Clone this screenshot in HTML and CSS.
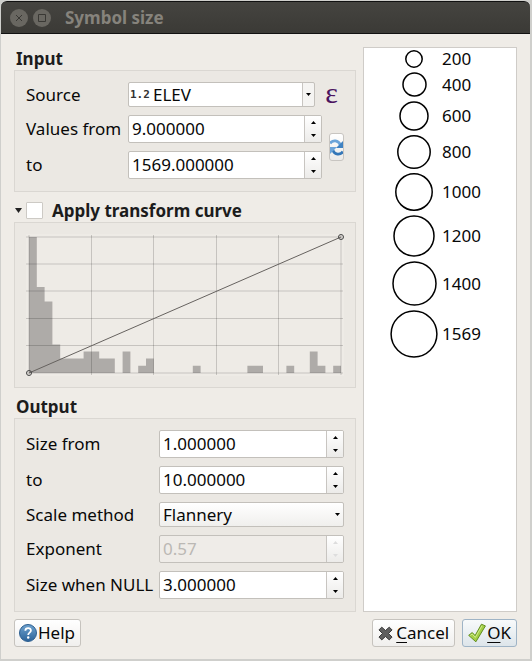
FILE: index.html
```html
<!DOCTYPE html>
<html lang="en">
<head>
<meta charset="utf-8">
<title>Symbol size</title>
<link rel="stylesheet" href="styles.css">
</head>
<body>
<main class="window">
  <header class="titlebar">
    <button class="win-btn" type="button" aria-label="Close">
      <svg viewBox="0 0 18 18"><path d="M6 6l6 6M12 6l-6 6"/></svg>
    </button>
    <button class="win-btn" type="button" aria-label="Maximize">
      <svg viewBox="0 0 18 18"><path d="M5.500 5.500h7v7h-7z"/></svg>
    </button>
    <h1 class="title">Symbol size</h1>
  </header>

  <form class="content">
    <div class="panes">
      <div class="settings">
        <section>
          <h2 class="heading">Input</h2>
          <div class="frame input-grid">
            <label for="source">Source</label>
            <div class="source-row">
              <div class="field-select">
                <span class="type-icon">1.2</span>
                <select id="source" class="select editable"><option>ELEV</option></select>
                <svg class="caret" viewBox="0 0 5 3"><path d="M0 0h5L2.500 3z"/></svg>
              </div>
              <button class="expression" type="button" aria-label="Expression">ε</button>
            </div>

            <label for="from">Values from</label>
            <div class="spin">
              <input id="from" type="text" value="9.000000">
              <div class="steps">
                <button type="button" aria-label="Increase"><svg viewBox="0 0 5 3"><path d="M0 3h5L2.500 0z"/></svg></button>
                <button type="button" aria-label="Decrease"><svg viewBox="0 0 5 3"><path d="M0 0h5L2.500 3z"/></svg></button>
              </div>
            </div>
            <button class="refresh" type="button" aria-label="Refresh">
              <svg viewBox="0 0 14 20">
                <path class="ring-dark" d="M0 5.500C3 1.500 9 2 11 7"/>
                <path class="head-dark" d="M14 3v7.500H6.500z"/>
                <path class="ring-light" d="M14 14.500C11 18.500 5 18 3 13"/>
                <path class="head-light" d="M0 17V9.500h7.500z"/>
              </svg>
            </button>

            <label for="upto">to</label>
            <div class="spin">
              <input id="upto" type="text" value="1569.000000">
              <div class="steps">
                <button type="button" aria-label="Increase"><svg viewBox="0 0 5 3"><path d="M0 3h5L2.500 0z"/></svg></button>
                <button type="button" aria-label="Decrease"><svg viewBox="0 0 5 3"><path d="M0 0h5L2.500 3z"/></svg></button>
              </div>
            </div>
          </div>
        </section>

        <section>
          <h2 class="heading curve-heading">
            <svg class="fold" viewBox="0 0 7 5"><path d="M0 0h7L3.500 5z"/></svg>
            <input id="curve" type="checkbox">
            <label for="curve">Apply transform curve</label>
          </h2>
          <div class="frame chart-frame">
            <svg class="chart" viewBox="0 0 318 142" role="img" aria-label="Histogram with transform curve">
              <rect class="plot" width="318" height="142"/>
              <path class="bars" d="M3 139V3h7.800v50h7.800v14.500h7.800v43h7.800v14h23.400v-7h15.600v7h15.600V139zM96.600 139v-21.500h7.800V139zM112.200 139v-7.200h7.800v-7.200h7.800V139zM166.800 139v-7.200h7.800v7.200zM221.400 139v-7.200h15.600v7.200zM260.400 139v-7.200h7.800v7.200zM283.800 139v-21.500h7.800v14.300h7.800v7.200zM307.200 139v-7.200h7.800v7.200z"/>
              <path class="grid" d="M3 1v140M65.500 1v140M127.500 1v140M190.500 1v140M252.500 1v140M315 1v140M0 3h317M0 30h317M0 57h317M0 84.500h317M0 111.500h317M0 139h317"/>
              <path class="curve" d="M3 139L315 3"/>
              <circle class="knot" cx="3" cy="139" r="2.500"/>
              <circle class="knot" cx="315" cy="3" r="2.500"/>
            </svg>
          </div>
        </section>

        <section>
          <h2 class="heading">Output</h2>
          <div class="frame output-grid">
            <label for="size-from">Size from</label>
            <div class="spin">
              <input id="size-from" type="text" value="1.000000">
              <div class="steps">
                <button type="button" aria-label="Increase"><svg viewBox="0 0 5 3"><path d="M0 3h5L2.500 0z"/></svg></button>
                <button type="button" aria-label="Decrease"><svg viewBox="0 0 5 3"><path d="M0 0h5L2.500 3z"/></svg></button>
              </div>
            </div>
            <label for="size-to">to</label>
            <div class="spin">
              <input id="size-to" type="text" value="10.000000">
              <div class="steps">
                <button type="button" aria-label="Increase"><svg viewBox="0 0 5 3"><path d="M0 3h5L2.500 0z"/></svg></button>
                <button type="button" aria-label="Decrease"><svg viewBox="0 0 5 3"><path d="M0 0h5L2.500 3z"/></svg></button>
              </div>
            </div>
            <label for="method">Scale method</label>
            <div class="field-select">
              <select id="method" class="select"><option>Flannery</option></select>
              <svg class="caret" viewBox="0 0 5 3"><path d="M0 0h5L2.500 3z"/></svg>
            </div>
            <label for="exponent">Exponent</label>
            <div class="spin disabled">
              <input id="exponent" type="text" value="0.57" disabled>
              <div class="steps">
                <button type="button" aria-label="Increase" disabled><svg viewBox="0 0 5 3"><path d="M0 3h5L2.500 0z"/></svg></button>
                <button type="button" aria-label="Decrease" disabled><svg viewBox="0 0 5 3"><path d="M0 0h5L2.500 3z"/></svg></button>
              </div>
            </div>
            <label for="size-null">Size when NULL</label>
            <div class="spin">
              <input id="size-null" type="text" value="3.000000">
              <div class="steps">
                <button type="button" aria-label="Increase"><svg viewBox="0 0 5 3"><path d="M0 3h5L2.500 0z"/></svg></button>
                <button type="button" aria-label="Decrease"><svg viewBox="0 0 5 3"><path d="M0 0h5L2.500 3z"/></svg></button>
              </div>
            </div>
          </div>
        </section>
      </div>

      <ul class="legend">
        <li><svg class="dot" width="18" height="18"><circle cx="9" cy="9" r="8.200"/></svg>200</li>
        <li><svg class="dot" width="25" height="25"><circle cx="12.500" cy="12.500" r="11.500"/></svg>400</li>
        <li><svg class="dot" width="30" height="30"><circle cx="15" cy="15" r="14"/></svg>600</li>
        <li><svg class="dot" width="34" height="34"><circle cx="17" cy="17" r="16.200"/></svg>800</li>
        <li><svg class="dot" width="38" height="38"><circle cx="19" cy="19" r="18.200"/></svg>1000</li>
        <li><svg class="dot" width="42" height="42"><circle cx="21" cy="21" r="20"/></svg>1200</li>
        <li><svg class="dot" width="45" height="45"><circle cx="22.500" cy="22.500" r="21.500"/></svg>1400</li>
        <li><svg class="dot" width="48" height="48"><circle cx="24" cy="24" r="22.900"/></svg>1569</li>
      </ul>
    </div>

    <footer class="actions">
      <button class="btn help" type="button">
        <svg class="help-icon" viewBox="0 0 18 18">
          <defs><linearGradient id="blue" x2="0" y2="1"><stop offset="0" stop-color="#6fa3cf"/><stop offset="1" stop-color="#2a6299"/></linearGradient></defs>
          <circle cx="9" cy="9" r="8.500" fill="url(#blue)" stroke="#2d5f90"/>
          <path d="M6.300 6.700c.2-3.600 5.800-3.400 5.600 0-.1 2-2.700 2-2.700 4.300" fill="none" stroke="#fff" stroke-width="1.800"/>
          <circle cx="9.200" cy="13.500" r="1.200" fill="#fff"/>
        </svg><span>Help</span>
      </button>
      <button class="btn cancel" type="button">
        <svg class="cancel-icon" viewBox="0 0 16 16">
          <path d="M4 1.200l4 3.600 4-3.600 3 3L11.200 8l3.800 3.800-3 3-4-3.600-4 3.600-3-3L4.800 8 1 4.200z" fill="#5f5f5f" stroke="#333" stroke-linejoin="round"/>
        </svg><span><u>C</u>ancel</span>
      </button>
      <button class="btn ok" type="submit">
        <svg class="ok-icon" viewBox="0 0 19 20">
          <path d="M.7 12.500l3.800-3 3 3.200L14.200.7l4.200 1.800L8.300 19.300z" fill="#a3cf45" stroke="#5d8a1c" stroke-linejoin="round"/>
          <path d="M2.400 12.600l2-1.500 3.300 3.600L14.800 2.300" fill="none" stroke="#d3ec92"/>
        </svg><span><u>O</u>K</span>
      </button>
    </footer>
  </form>
</main>
</body>
</html>
```
FILE: styles.css
```css
* { box-sizing: border-box; }

body {
  margin: 0;
  padding: 1px 2px 2px 1px;
  min-height: 100vh;
  display: flex;
  background: #cfcfcc;
  color: #080808;
  font: 17px/20px "Noto Sans", sans-serif;
}

button, input, select { font: inherit; color: inherit; margin: 0; padding: 0; }
svg { display: block; }

.window {
  flex: 1;
  display: flex;
  flex-direction: column;
  background: #efece7;
  border-radius: 6px 6px 0 0;
}

.titlebar {
  height: 33px;
  padding: 0 9px;
  display: flex;
  align-items: center;
  gap: 5px;
  background: linear-gradient(#454440, #3b3a36);
  border: solid #111;
  border-width: 1px 0;
  border-radius: 6px 6px 0 0;
}
.win-btn {
  width: 18px;
  height: 18px;
  border: 0;
  border-radius: 50%;
  background: #696761;
}
.win-btn svg { fill: none; stroke: #393834; stroke-width: 1; }
.title { margin: 0 0 0 9px; font-size: 17px; line-height: 20px; color: #86837c; }

.content { flex: 1; display: flex; flex-direction: column; padding: 13px 13px 12px; }
.panes { flex: 1; display: flex; gap: 7px; }
.settings { flex: 1; display: flex; flex-direction: column; gap: 7px; }

.heading {
  height: 23px;
  margin: 0;
  padding-left: 2px;
  font-size: 17px;
  line-height: 23px;
  color: #1c1c1c;
}
.frame { border: 1px solid #dad7d2; background: #ebe8e3; }
.frame label { white-space: nowrap; align-self: center; }

.input-grid, .output-grid { display: grid; align-items: center; row-gap: 8px; }
.input-grid { grid-template-columns: 95px 1fr 15px; column-gap: 7px; padding: 11px 11px 12px; }
.output-grid { grid-template-columns: 125px 1fr; column-gap: 8px; padding: 11px 11px 12px; }

.source-row { grid-column: 2 / 4; display: flex; }
.source-row .field-select { flex: 1; }
.expression {
  width: 29px;
  height: 25px;
  padding: 0 0 4px 4px;
  border: 0;
  background: none;
  color: #4b1460;
  font: 30px/20px "Liberation Serif", serif;
}

.field-select { position: relative; }
.select {
  display: block;
  appearance: none;
  width: 100%;
  height: 25px;
  padding: 0 3px;
  border: 1px solid #c3c0bb;
  border-radius: 2px;
  background: linear-gradient(#fff, #f0efed);
  line-height: 22px;
}
.editable {
  padding-left: 24px;
  background: linear-gradient(90deg, #fff calc(100% - 12px), #c8c5c1 calc(100% - 12px), #c8c5c1 calc(100% - 11px), #f5f4f2 calc(100% - 11px));
}
.type-icon {
  position: absolute;
  left: 2px;
  top: 3px;
  color: #333;
  font: bold 11px/20px "DejaVu Sans Mono", monospace;
}
.caret { position: absolute; right: 4px; top: 11px; width: 5px; height: 3px; }

.spin {
  height: 28px;
  display: flex;
  border: 1px solid #c3c0bb;
  border-radius: 2px;
  background: #fff;
  overflow: hidden;
}
.spin input { flex: 1; min-width: 0; padding-left: 3px; border: 0; outline: 0; background: none; }
.steps {
  width: 17px;
  display: flex;
  flex-direction: column;
  border-left: 1px solid #c8c5c1;
  background: linear-gradient(#fff, #ecebe9);
}
.steps button { flex: 1; display: grid; place-items: center; border: 0; background: none; }
.steps svg { width: 5px; height: 3px; }
.spin.disabled { background: #efece8; color: #bbb8b4; }
.disabled svg { fill: #ddd; }

.refresh {
  grid-column: 3;
  grid-row: 2 / 4;
  height: 28px;
  display: grid;
  place-items: center;
  border: 1px solid #c8c5c1;
  border-radius: 3px;
  background: linear-gradient(#fff, #ecebe9);
}
.refresh svg { width: 13px; height: 19px; }
.ring-dark, .ring-light { fill: none; stroke-width: 3; }
.ring-dark { stroke: #6ba4d9; }
.head-dark { fill: #3f82c2; }
.ring-light { stroke: #3477b8; }
.head-light { fill: #6ba4d9; }

.curve-heading { display: flex; align-items: center; padding-left: 1px; }
.fold { width: 7px; height: 5px; margin-right: 4px; fill: #222; }
.curve-heading input {
  appearance: none;
  width: 17px;
  height: 17px;
  margin-right: 9px;
  border: 1px solid #cdcac5;
  border-radius: 1px;
  background: #fff;
}

.chart-frame { padding: 11px; }
.chart { width: 100%; height: auto; }
.plot { fill: #eeebe6; }
.bars { fill: #aeaba8; }
.grid { fill: none; stroke: #000; stroke-opacity: .17; }
.curve { stroke: #66625f; }
.knot { fill: none; stroke: #444; }

.legend {
  width: 154px;
  margin: 0;
  padding: 2px 0 0 26px;
  list-style: none;
  border: 1px solid #cfccc8;
  background: #fff;
  display: flex;
  flex-direction: column;
  gap: 4px;
}
.legend li {
  display: grid;
  grid-template-columns: 48px auto;
  column-gap: 4px;
  align-items: center;
  line-height: 18px;
}
.dot { justify-self: center; fill: none; stroke: #000; stroke-width: 1.5; }

.actions { display: flex; gap: 7px; margin-top: 7px; }
.btn {
  height: 28px;
  display: flex;
  align-items: center;
  padding: 0 5px;
  gap: 1px;
  border: 1px solid #c6c3be;
  border-radius: 3px;
  background: linear-gradient(#fff, #f0efed);
}
.help { margin-right: auto; padding: 0 5px 0 4px; }
.cancel { gap: 3px; }
.ok { border-color: #9fb4c6; background: linear-gradient(#f8fafb, #dde5ea); }
.btn u { text-underline-offset: 3px; }
.help-icon { width: 18px; height: 18px; }
.cancel-icon { width: 15px; height: 15px; }
.ok-icon { width: 18px; height: 20px; }
```
